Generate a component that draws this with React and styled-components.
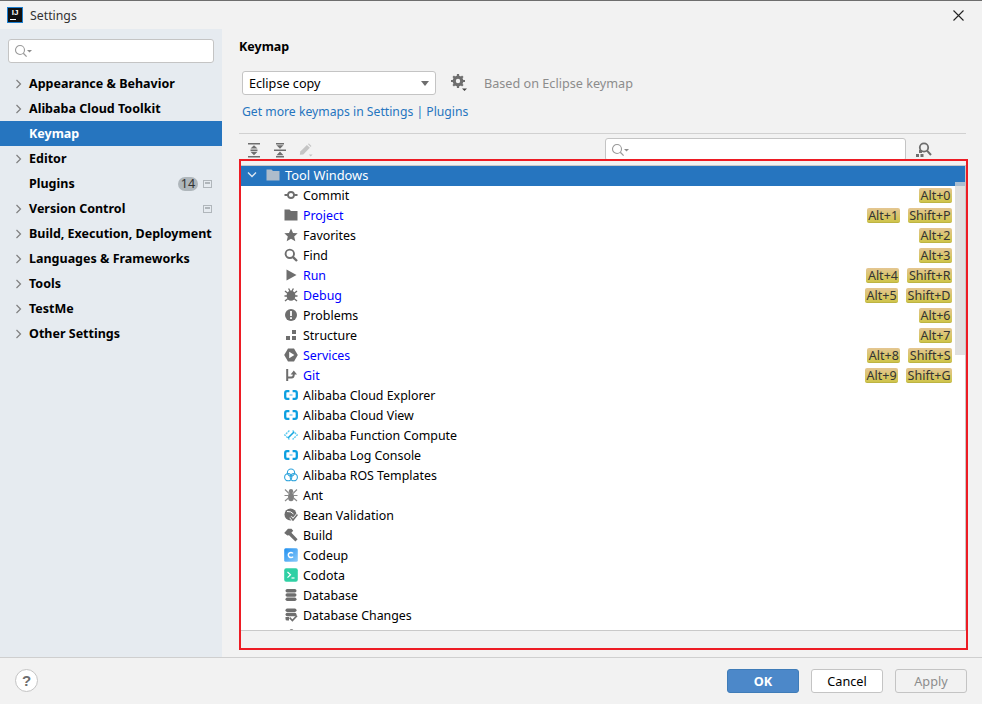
import React from 'react'
import styled, { createGlobalStyle } from 'styled-components'

const GlobalStyle = createGlobalStyle`
  html, body {
    margin: 0;
    padding: 0;
    background: #f2f2f2;
    overflow: hidden;
  }
  * {
    box-sizing: border-box;
  }
`

const Win = styled.div`
  display: flex;
  flex-direction: column;
  width: 982px;
  height: 704px;
  border-top: 1px solid #6e6e6e;
  background: #f2f2f2;
  font-family: "Noto Sans", "Open Sans", sans-serif;
  font-size: 12.4px;
  color: #000;
`

const TitleBar = styled.div`
  display: flex;
  align-items: center;
  height: 28px;
  padding: 0 18px 0 7px;
  flex: none;
`

const AppLogo = styled.div`
  position: relative;
  width: 16px;
  height: 16px;
  background: #111;
  border: 1px solid #1d7fd0;
  color: #fff;
  font-family: "Liberation Sans", sans-serif;
  font-size: 8px;
  font-weight: bold;
  line-height: 10px;
  text-align: center;
  flex: none;
`

const LogoBar = styled.div`
  position: absolute;
  left: 2px;
  bottom: 2px;
  width: 6px;
  height: 1px;
  background: #fff;
`

const WinTitle = styled.div`
  margin-left: 7px;
  font-size: 12.3px;
  color: #333;
  flex: 1;
`

const Body = styled.div`
  display: flex;
  flex: 1;
  min-height: 0;
`

const Sidebar = styled.div`
  width: 222px;
  flex: none;
  background: #e6ebf0;
  padding-top: 10px;
`

const SearchBox = styled.div`
  display: flex;
  align-items: center;
  background: #fff;
  border: 1px solid #c4c4c4;
  border-radius: 3px;
  padding-left: 5px;
  width: ${p => p.$width}px;
  height: ${p => p.$height}px;
  margin-left: ${p => p.$left || 'auto'};
`

const NavList = styled.div`
  margin-top: 8px;
`

const NavRow = styled.div`
  display: flex;
  align-items: center;
  height: 25px;
  padding: 0 10px 0 15px;
  font-weight: 700;
  font-size: 12.5px;
  color: ${p => (p.$active ? '#fff' : '#000')};
  background: ${p => (p.$active ? '#2675bf' : 'transparent')};
`

const NavArrow = styled.div`
  width: 14px;
  flex: none;
  display: flex;
`

const NavLabel = styled.div`
  flex: 1;
  white-space: nowrap;
`

const CountBadge = styled.div`
  width: 20px;
  height: 14px;
  margin-right: 5px;
  border-radius: 7px;
  background: #afb6bb;
  color: #333;
  font-size: 12.5px;
  font-weight: 400;
  line-height: 14px;
  text-align: center;
`

const Main = styled.div`
  flex: 1;
  min-width: 0;
  padding: 8px 16px 0 17px;
  display: flex;
  flex-direction: column;
`

const Heading = styled.div`
  height: 18px;
  line-height: 20px;
  font-weight: 700;
  font-size: 12.5px;
`

const KeymapRow = styled.div`
  display: flex;
  align-items: center;
  height: 24px;
  margin-top: 16px;
  padding-left: 3px;
`

const Select = styled.div`
  display: flex;
  align-items: center;
  justify-content: space-between;
  width: 194px;
  height: 24px;
  padding: 0 6px 1px 6px;
  background: #fff;
  border: 1px solid #c4c4c4;
  border-radius: 3px;
  font-size: 12.65px;
`

const SelectCaret = styled.div`
  width: 0;
  height: 0;
  margin-top: 1px;
  border-left: 4.5px solid transparent;
  border-right: 4.5px solid transparent;
  border-top: 5px solid #6e6e6e;
`

const GearWrap = styled.div`
  display: flex;
  margin-left: 15px;
`

const BasedOn = styled.div`
  margin-left: 16px;
  font-size: 12.65px;
  color: #8c8c8c;
`

const LinkRow = styled.div`
  height: 20px;
  line-height: 20px;
  margin-top: 7px;
  padding-left: 3px;
  font-size: 12.2px;
  color: #2675bf;
`

const Separator = styled.div`
  height: 1px;
  margin-top: 11px;
  background: #d1d1d1;
`

const Toolbar = styled.div`
  display: flex;
  align-items: flex-start;
  height: 31px;
  padding: 4px 34px 0 8px;
  flex: none;
`

const ToolButton = styled.div`
  display: flex;
  width: 14px;
  height: 16px;
  margin-top: 4px;
  margin-right: 12px;
`

const FindShortcut = styled.div`
  display: flex;
  margin-top: 4px;
  margin-left: 10px;
`

const Tree = styled.div`
  position: relative;
  height: 466px;
  flex: none;
  background: #fff;
  border-top: 1px solid #c9c9c9;
  border-bottom: 1px solid #c9c9c9;
  border-right: 1px solid #c9c9c9;
`

const TreeClip = styled.div`
  height: 100%;
  overflow: hidden;
`

const GroupRow = styled.div`
  display: flex;
  align-items: center;
  height: 20px;
  padding: 0 0 2px 8px;
  background: #2675bf;
  color: #fff;
  font-size: 12.85px;
`

const GroupArrow = styled.div`
  display: flex;
  width: 19px;
`

const GroupLabel = styled.div`
  margin-left: 5px;
`

const ActionRow = styled.div`
  display: flex;
  align-items: center;
  height: 20px;
  padding: 0 13px 2px 45px;
`

const ActionIcon = styled.div`
  display: flex;
  width: 14px;
  height: 14px;
  margin-right: 5px;
  flex: none;
`

const ActionLabel = styled.div`
  flex: 1;
  white-space: nowrap;
  color: ${p => (p.$bound ? '#0000ff' : '#000')};
`

const Shortcut = styled.div`
  height: 15px;
  line-height: 15px;
  margin: 1px 0 0 8px;
  padding: 0 1.5px;
  border-radius: 2px;
  background: linear-gradient(#e4c692, #cfc44b);
  border-bottom: 1px solid #bdb442;
  color: #333;
  font-size: 12.5px;
  white-space: nowrap;
`

const Scrollbar = styled.div`
  position: absolute;
  top: 16px;
  right: 0;
  width: 10px;
  height: 173px;
  background: rgba(214, 214, 214, 0.75);
`

const Highlight = styled.div`
  position: absolute;
  top: -7px;
  left: 0;
  right: -3px;
  bottom: -20px;
  border: 2px solid #ed1c24;
  pointer-events: none;
`

const Footer = styled.div`
  display: flex;
  align-items: flex-start;
  height: 47px;
  flex: none;
  padding: 11px 15px 0 15px;
  border-top: 1px solid #cfcfcf;
`

const HelpButton = styled.div`
  width: 23px;
  height: 23px;
  border: 1px solid #c4c4c4;
  border-radius: 50%;
  background: #fff;
  color: #6e6e6e;
  font-family: "Liberation Sans", sans-serif;
  font-weight: 700;
  font-size: 15px;
  line-height: 21px;
  text-align: center;
`

const Spacer = styled.div`
  flex: 1;
`

const DialogButton = styled.div`
  width: 72px;
  height: 24px;
  margin-left: 12px;
  border: 1px solid ${p => (p.$primary ? '#3f7cb8' : '#c4c4c4')};
  border-radius: 3px;
  background: ${p => (p.$primary ? '#4c88c9' : p.$disabled ? '#f2f2f2' : '#fff')};
  color: ${p => (p.$primary ? '#fff' : p.$disabled ? '#8c8c8c' : '#000')};
  font-weight: ${p => (p.$primary ? 700 : 400)};
  font-size: 12.7px;
  line-height: 22px;
  text-align: center;
`

const GREY = '#6e6e6e'

const Svg = ({ size = 14, children }) => (
  <svg width={size} height={size} viewBox="0 0 14 14" fill="none">{children}</svg>
)

const SearchGlyph = () => (
  <svg width="20" height="14" viewBox="0 0 20 14" fill="none">
    <circle cx="6" cy="6" r="4.5" stroke="#9a9a9a" strokeWidth="1.1" />
    <path d="M9.3 9.3 L12.6 12.6" stroke="#9a9a9a" strokeWidth="1.3" />
    <path d="M13 6 H18 L15.5 8.6 Z" fill="#8c8c8c" />
  </svg>
)

const Chevron = () => (
  <svg width="8" height="10" viewBox="0 0 8 10" fill="none">
    <path d="M1.5 1 L5.5 5 L1.5 9" stroke="#7f7f7f" strokeWidth="1.2" />
  </svg>
)

const ChevronDown = () => (
  <svg width="10" height="8" viewBox="0 0 10 8" fill="none">
    <path d="M1 1.5 L5 5.5 L9 1.5" stroke="#dfe8f2" strokeWidth="1.3" />
  </svg>
)

const ProjectMark = () => (
  <svg width="9" height="8" viewBox="0 0 9 8" fill="none">
    <rect x="0.5" y="0.5" width="8" height="7" fill="#e6ebf0" stroke="#b0b6bb" />
    <rect x="2" y="2" width="5" height="2" fill="#b0b6bb" />
  </svg>
)

const Gear = () => (
  <svg width="17" height="18" viewBox="0 0 17 18" fill="none">
    <circle cx="7" cy="7" r="3.8" stroke={GREY} strokeWidth="3.2" />
    <path d="M7 0 V3 M7 11 V14 M0 7 H3 M11 7 H14 M2.2 2.2 L4 4 M10 10 L11.8 11.8 M2.2 11.8 L4 10 M10 4 L11.8 2.2" stroke={GREY} strokeWidth="2.2" />
    <path d="M11 14.5 H16 L13.5 17 Z" fill="#444" />
  </svg>
)

const ExpandAll = () => (
  <svg width="14" height="16" viewBox="0 0 14 16" fill="none">
    <path d="M1 1.7 H13 M1 14.8 H13 M3.5 8.2 H10.5" stroke={GREY} strokeWidth="1.5" />
    <path d="M7 3.2 L10.5 6.6 H3.5 Z M7 13.3 L10.5 9.8 H3.5 Z" fill={GREY} />
  </svg>
)

const CollapseAll = () => (
  <svg width="14" height="16" viewBox="0 0 14 16" fill="none">
    <path d="M1 8.2 H13 M3 1.7 H11 M3 14.8 H11" stroke={GREY} strokeWidth="1.5" />
    <path d="M7 6.8 L3.5 3.2 H10.5 Z M7 9.6 L3.5 13.2 H10.5 Z" fill={GREY} />
  </svg>
)

const Pencil = () => (
  <svg width="17" height="16" viewBox="0 0 17 16" fill="none">
    <path d="M1 13.8 L1.6 9.8 L9.6 1.8 L13.2 5.4 L5.2 13.4 Z" fill="#c4c4c4" />
    <path d="M10.8 0.8 L12 0 L15 3 L14.2 4.4 Z" fill="#c4c4c4" />
    <path d="M12 13.5 H16.5 L14.2 15.8 Z" fill="#c4c4c4" />
  </svg>
)

const FindKey = () => (
  <svg width="16" height="15" viewBox="0 0 16 15" fill="none">
    <circle cx="8" cy="5.5" r="4.2" stroke={GREY} strokeWidth="1.8" />
    <path d="M11 8.6 L15 13" stroke={GREY} strokeWidth="2" />
    <rect x="3" y="8" width="3" height="3" fill={GREY} />
    <rect x="0" y="12" width="3" height="3" fill={GREY} />
    <rect x="4.5" y="12" width="3" height="3" fill={GREY} />
  </svg>
)

const FolderPath = ({ fill }) => <path d="M0.5 1.5 H5.5 L7 3 H13.5 V12.5 H0.5 Z" fill={fill} />

const CloudBracket = () => (
  <Svg>
    <path d="M5.4 3.2 H3 Q1.2 3.2 1.2 5 V9 Q1.2 10.8 3 10.8 H5.4 M8.6 3.2 H11 Q12.8 3.2 12.8 5 V9 Q12.8 10.8 11 10.8 H8.6" stroke="#0b9fe0" strokeWidth="2.3" />
    <path d="M5.5 7 H8.5" stroke="#6cc6ef" strokeWidth="1.3" />
  </Svg>
)

const Disc = ({ y }) => <rect x="1.5" y={y} width="11" height="3.4" rx="1.7" fill={GREY} />

const iconMap = {
  commit: (
    <Svg>
      <circle cx="7" cy="7" r="3" stroke={GREY} strokeWidth="1.8" />
      <path d="M0.5 7 H4 M10 7 H13.5" stroke={GREY} strokeWidth="1.8" />
    </Svg>
  ),
  folder: <Svg><FolderPath fill={GREY} /></Svg>,
  star: <Svg><path d="M7 0.5 L9 4.9 L13.7 5.3 L10.2 8.4 L11.3 13.3 L7 10.7 L2.7 13.3 L3.8 8.4 L0.3 5.3 L5 4.9 Z" fill={GREY} /></Svg>,
  find: (
    <Svg>
      <circle cx="5.8" cy="5.8" r="4.2" stroke={GREY} strokeWidth="1.9" />
      <path d="M8.8 8.8 L13 13" stroke={GREY} strokeWidth="2.4" />
    </Svg>
  ),
  run: <Svg><path d="M2.5 1.5 L12.5 7 L2.5 12.5 Z" fill={GREY} /></Svg>,
  debug: (
    <Svg>
      <ellipse cx="7" cy="7.6" rx="4.4" ry="5.2" fill={GREY} />
      <path d="M1 3 L4 5.5 M13 3 L10 5.5 M0.5 8 H3.5 M13.5 8 H10.5 M1 13 L4 10.5 M13 13 L10 10.5 M4.6 0.5 L6 3 M9.4 0.5 L8 3" stroke={GREY} strokeWidth="1.4" />
    </Svg>
  ),
  problems: (
    <Svg>
      <circle cx="7" cy="7" r="6" fill={GREY} />
      <path d="M7 3 V8" stroke="#fff" strokeWidth="1.8" />
      <rect x="6.1" y="9.2" width="1.8" height="1.8" fill="#fff" />
    </Svg>
  ),
  structure: (
    <Svg>
      <rect x="2" y="8" width="4" height="4" fill={GREY} />
      <rect x="8" y="8" width="4" height="4" fill={GREY} />
      <rect x="8" y="2" width="4" height="4" fill={GREY} />
    </Svg>
  ),
  services: (
    <Svg>
      <path d="M4 0.5 H10 L13.8 7 L10 13.5 H4 L0.2 7 Z" fill={GREY} />
      <path d="M5.2 3.8 L10.4 7 L5.2 10.2 Z" fill="#fff" />
    </Svg>
  ),
  git: (
    <Svg>
      <path d="M3.2 1 V13 M3.2 9.5 H7.5 Q9.8 9.5 9.8 6" stroke={GREY} strokeWidth="2" />
      <path d="M9.8 2.5 L13 6.4 H6.6 Z" fill={GREY} />
    </Svg>
  ),
  cloud: <CloudBracket />,
  fc: (
    <Svg>
      <path d="M5.4 2.6 L0.8 7 L5.4 11.4 M8.6 2.6 L13.2 7 L8.6 11.4" stroke="#5ccaf0" strokeWidth="1.4" strokeDasharray="2 0.8" />
      <path d="M4 10 L10 4" stroke="#19a7e0" strokeWidth="1.6" />
    </Svg>
  ),
  ros: (
    <Svg>
      <circle cx="7" cy="4.6" r="3.6" stroke="#2fa4dc" strokeWidth="1.1" />
      <circle cx="4.2" cy="9.2" r="3.6" stroke="#2fa4dc" strokeWidth="1.1" />
      <circle cx="9.8" cy="9.2" r="3.6" stroke="#2fa4dc" strokeWidth="1.1" />
    </Svg>
  ),
  ant: (
    <Svg>
      <circle cx="7" cy="3.2" r="2.2" fill="#808080" />
      <ellipse cx="7" cy="9" rx="3" ry="4.2" fill="#808080" />
      <path d="M1 1.5 L5 5.5 M13 1.5 L9 5.5 M0.5 7.5 H5 M13.5 7.5 H9 M1 13 L5 9.5 M13 13 L9 9.5" stroke="#8c8c8c" strokeWidth="1.2" />
    </Svg>
  ),
  bean: (
    <Svg>
      <circle cx="6.5" cy="6.5" r="6" fill={GREY} />
      <path d="M3 3.5 Q7 3 9.5 6" stroke="#fff" strokeWidth="1" />
      <path d="M6.5 9 L9 12 L13.5 6.5" stroke="#fff" strokeWidth="3" />
      <path d="M6.5 9 L9 12 L13.5 6.5" stroke={GREY} strokeWidth="1.5" />
    </Svg>
  ),
  build: (
    <Svg>
      <path d="M0.2 5 L4 0.8 H7.5 L9.2 2.8 L7.4 4.8 L13.6 11.2 L11.4 13.4 L5 7.2 L3.4 7.4 Z" fill={GREY} />
    </Svg>
  ),
  codeup: (
    <Svg>
      <defs>
        <linearGradient id="codeupFill" x1="0" y1="0" x2="1" y2="1">
          <stop offset="0" stopColor="#1f8ff0" />
          <stop offset="1" stopColor="#8ccbf9" />
        </linearGradient>
      </defs>
      <rect x="0.2" y="0.2" width="13.6" height="13.6" rx="1.5" fill="url(#codeupFill)" />
      <path d="M9 5.4 A2.6 2.6 0 1 0 9 8.6" stroke="#fff" strokeWidth="1.5" />
    </Svg>
  ),
  codota: (
    <Svg>
      <rect x="0.2" y="0.2" width="13.6" height="13.6" rx="2" fill="#2fd0a4" />
      <path d="M3.5 4 L6.5 6.8 L3.5 9.6" stroke="#fff" strokeWidth="1.2" />
      <path d="M7.5 10 H10.5" stroke="#fff" strokeWidth="1.2" />
    </Svg>
  ),
  database: (
    <Svg>
      <Disc y={1} />
      <Disc y={5.3} />
      <Disc y={9.6} />
    </Svg>
  ),
  dbchanges: (
    <Svg>
      <Disc y={0.6} />
      <Disc y={4.8} />
      <path d="M1.5 9 H5 V12.6 H3 Q1.5 12.6 1.5 11 Z" fill={GREY} />
      <path d="M5.6 9.6 L8.4 12.6 L13 7.6" stroke={GREY} strokeWidth="1.6" />
    </Svg>
  ),
  clipped: (
    <Svg>
      <ellipse cx="7.5" cy="3" rx="2" ry="2" fill="#8c8c8c" />
    </Svg>
  )
}

const navItems = [
  { label: 'Appearance & Behavior', arrow: true },
  { label: 'Alibaba Cloud Toolkit', arrow: true },
  { label: 'Keymap', active: true },
  { label: 'Editor', arrow: true },
  { label: 'Plugins', badge: '14', mark: true },
  { label: 'Version Control', arrow: true, mark: true },
  { label: 'Build, Execution, Deployment', arrow: true },
  { label: 'Languages & Frameworks', arrow: true },
  { label: 'Tools', arrow: true },
  { label: 'TestMe', arrow: true },
  { label: 'Other Settings', arrow: true }
]

const actions = [
  { label: 'Commit', icon: 'commit', keys: ['Alt+0'] },
  { label: 'Project', icon: 'folder', bound: true, keys: ['Alt+1', 'Shift+P'] },
  { label: 'Favorites', icon: 'star', keys: ['Alt+2'] },
  { label: 'Find', icon: 'find', keys: ['Alt+3'] },
  { label: 'Run', icon: 'run', bound: true, keys: ['Alt+4', 'Shift+R'] },
  { label: 'Debug', icon: 'debug', bound: true, keys: ['Alt+5', 'Shift+D'] },
  { label: 'Problems', icon: 'problems', keys: ['Alt+6'] },
  { label: 'Structure', icon: 'structure', keys: ['Alt+7'] },
  { label: 'Services', icon: 'services', bound: true, keys: ['Alt+8', 'Shift+S'] },
  { label: 'Git', icon: 'git', bound: true, keys: ['Alt+9', 'Shift+G'] },
  { label: 'Alibaba Cloud Explorer', icon: 'cloud' },
  { label: 'Alibaba Cloud View', icon: 'cloud' },
  { label: 'Alibaba Function Compute', icon: 'fc' },
  { label: 'Alibaba Log Console', icon: 'cloud' },
  { label: 'Alibaba ROS Templates', icon: 'ros' },
  { label: 'Ant', icon: 'ant' },
  { label: 'Bean Validation', icon: 'bean' },
  { label: 'Build', icon: 'build' },
  { label: 'Codeup', icon: 'codeup' },
  { label: 'Codota', icon: 'codota' },
  { label: 'Database', icon: 'database' },
  { label: 'Database Changes', icon: 'dbchanges' },
  { label: '', icon: 'clipped' }
]

const App = () => {
  return (
    <Win>
      <GlobalStyle />
      <TitleBar>
        <AppLogo>IJ<LogoBar /></AppLogo>
        <WinTitle>Settings</WinTitle>
        <svg width="11" height="11" viewBox="0 0 11 11" fill="none">
          <path d="M0.5 0.5 L10.5 10.5 M10.5 0.5 L0.5 10.5" stroke="#222" strokeWidth="1.1" />
        </svg>
      </TitleBar>
      <Body>
        <Sidebar>
          <SearchBox $width={206} $height={24} $left="8px"><SearchGlyph /></SearchBox>
          <NavList>
            {navItems.map(item => (
              <NavRow key={item.label} $active={item.active}>
                <NavArrow>{item.arrow && <Chevron />}</NavArrow>
                <NavLabel>{item.label}</NavLabel>
                {item.badge && <CountBadge>{item.badge}</CountBadge>}
                {item.mark && <ProjectMark />}
              </NavRow>
            ))}
          </NavList>
        </Sidebar>
        <Main>
          <Heading>Keymap</Heading>
          <KeymapRow>
            <Select>Eclipse copy<SelectCaret /></Select>
            <GearWrap><Gear /></GearWrap>
            <BasedOn>Based on Eclipse keymap</BasedOn>
          </KeymapRow>
          <LinkRow>Get more keymaps in Settings | Plugins</LinkRow>
          <Separator />
          <Toolbar>
            <ToolButton><ExpandAll /></ToolButton>
            <ToolButton><CollapseAll /></ToolButton>
            <ToolButton><Pencil /></ToolButton>
            <SearchBox $width={301} $height={23}><SearchGlyph /></SearchBox>
            <FindShortcut><FindKey /></FindShortcut>
          </Toolbar>
          <Tree>
            <TreeClip>
              <GroupRow>
                <GroupArrow><ChevronDown /></GroupArrow>
                <Svg><FolderPath fill="#aebccb" /></Svg>
                <GroupLabel>Tool Windows</GroupLabel>
              </GroupRow>
              {actions.map(action => (
                <ActionRow key={action.label}>
                  <ActionIcon>{iconMap[action.icon]}</ActionIcon>
                  <ActionLabel $bound={action.bound}>{action.label}</ActionLabel>
                  {action.keys && action.keys.map(k => <Shortcut key={k}>{k}</Shortcut>)}
                </ActionRow>
              ))}
            </TreeClip>
            <Scrollbar />
            <Highlight />
          </Tree>
        </Main>
      </Body>
      <Footer>
        <HelpButton>?</HelpButton>
        <Spacer />
        <DialogButton $primary>OK</DialogButton>
        <DialogButton>Cancel</DialogButton>
        <DialogButton $disabled>Apply</DialogButton>
      </Footer>
    </Win>
  )
}

export default App
